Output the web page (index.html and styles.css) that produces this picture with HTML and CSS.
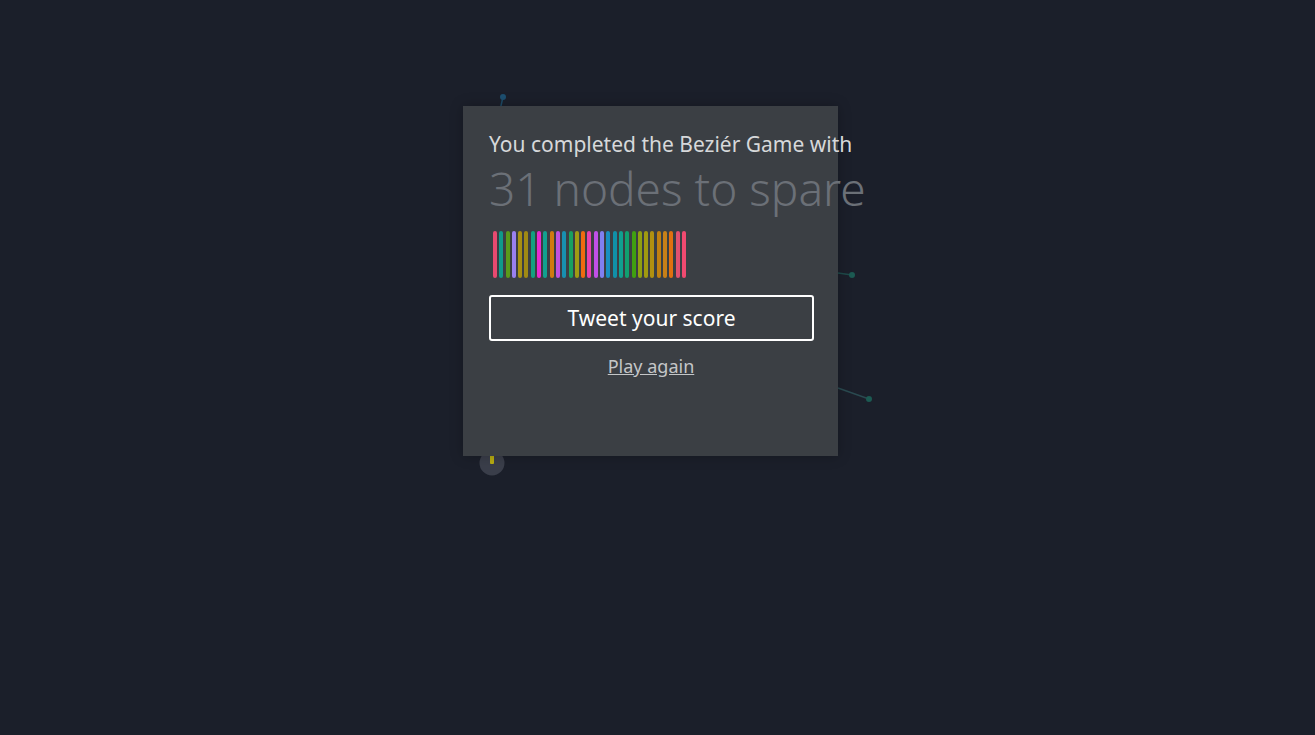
FILE: index.html
```html
<!DOCTYPE html>
<html>
<head>
<meta charset="utf-8">
<link rel="stylesheet" href="styles.css">
</head>
<body>
<svg class="canvas" width="1315" height="735" viewBox="0 0 1315 735">
  <line x1="503" y1="97" x2="500" y2="110" stroke="#1d4a66" stroke-width="1.5"/>
  <circle cx="503" cy="97" r="3" fill="#1d4f70"/>
  <line x1="838" y1="273" x2="852" y2="275" stroke="#1e4a4a" stroke-width="1.5"/>
  <circle cx="852" cy="275" r="3" fill="#1c5a52"/>
  <line x1="838" y1="388" x2="869" y2="399" stroke="#2a4a50" stroke-width="1.5"/>
  <circle cx="869" cy="399" r="3" fill="#1c5a52"/>
  <circle cx="492" cy="463" r="12.5" fill="#3a3e4a"/>
  <rect x="490" y="455" width="4" height="9" rx="1" fill="#b8ad12"/>
</svg>
<div class="dialog">
  <p class="lead">You completed the Beziér Game with</p>
  <p class="score">31 nodes to spare</p>
  <div class="bars">
    <span style="background:#e84a70"></span>
    <span style="background:#0f9a8a"></span>
    <span style="background:#5a9a1a"></span>
    <span style="background:#9a80f0"></span>
    <span style="background:#a89012"></span>
    <span style="background:#a08a14"></span>
    <span style="background:#14a080"></span>
    <span style="background:#e82ad0"></span>
    <span style="background:#12a090"></span>
    <span style="background:#d07a10"></span>
    <span style="background:#c050e0"></span>
    <span style="background:#1890b0"></span>
    <span style="background:#18a060"></span>
    <span style="background:#a09a14"></span>
    <span style="background:#f06a10"></span>
    <span style="background:#e840b0"></span>
    <span style="background:#c050e8"></span>
    <span style="background:#8080f0"></span>
    <span style="background:#1890c0"></span>
    <span style="background:#1090a8"></span>
    <span style="background:#10a090"></span>
    <span style="background:#10a070"></span>
    <span style="background:#40a010"></span>
    <span style="background:#90a010"></span>
    <span style="background:#a09a10"></span>
    <span style="background:#b09010"></span>
    <span style="background:#c08010"></span>
    <span style="background:#c88018"></span>
    <span style="background:#e07010"></span>
    <span style="background:#e05070"></span>
    <span style="background:#f04a70"></span>
  </div>
  <button class="tweet">Tweet your score</button>
  <a class="again" href="#">Play again</a>
</div>
</body>
</html>
```
FILE: styles.css
```css
html, body {
  margin: 0;
  height: 100%;
}
body {
  background: #1b1f2a;
  font-family: "Noto Sans", "Open Sans", sans-serif;
  padding: 106px 0 0 463px;
  box-sizing: border-box;
  position: relative;
  overflow: hidden;
}
.canvas {
  position: absolute;
  left: 0;
  top: 0;
}
.dialog {
  position: relative;
  width: 375px;
  height: 350px;
  box-sizing: border-box;
  padding: 24px 25px 0 26px;
  background: #3b3f44;
  box-shadow: 0 0 12px rgba(0,0,0,0.25);
  display: flex;
  flex-direction: column;
  align-items: flex-start;
}
.lead {
  margin: 0;
  font-size: 21px;
  line-height: 28px;
  color: #d6d8da;
  white-space: nowrap;
}
.score {
  margin: 2px 0 0 0;
  font-size: 46px;
  line-height: 56px;
  font-weight: 300;
  color: #6b7077;
  white-space: nowrap;
}
.bars {
  display: flex;
  gap: 2.3px;
  margin: 15px 0 0 4px;
  height: 47px;
}
.bars span {
  width: 4px;
  height: 47px;
  border-radius: 2px;
}
.tweet {
  margin-top: 17px;
  width: 325px;
  height: 46px;
  background: transparent;
  border: 2px solid #ffffff;
  border-radius: 3px;
  color: #ffffff;
  font-family: inherit;
  font-size: 21px;
  cursor: pointer;
  padding: 0;
}
.again {
  align-self: stretch;
  margin-top: 13px;
  text-align: center;
  font-size: 18px;
  color: #c4c6c8;
  text-decoration: underline;
}
```
